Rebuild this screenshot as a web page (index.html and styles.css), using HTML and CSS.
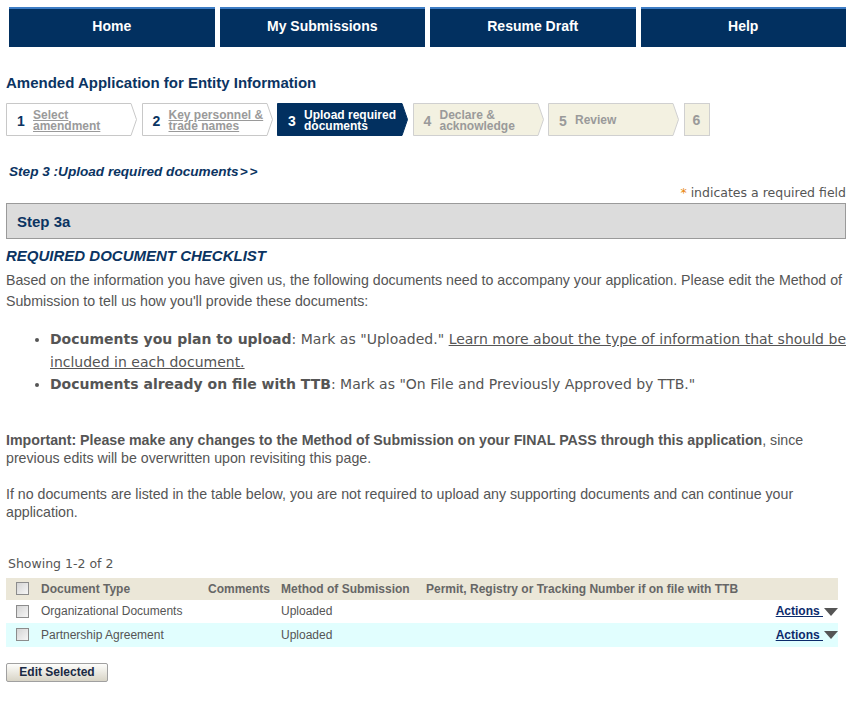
FILE: index.html
```html
<!DOCTYPE html>
<html lang="en">
<head>
<meta charset="utf-8">
<title>Amended Application for Entity Information</title>
<link rel="stylesheet" href="styles.css">
</head>
<body>
<nav class="topnav">
  <a class="navbtn" href="#">Home</a>
  <a class="navbtn" href="#">My Submissions</a>
  <a class="navbtn" href="#">Resume Draft</a>
  <a class="navbtn" href="#">Help</a>
</nav>
<main class="page">
  <h1 class="title">Amended Application for Entity Information</h1>

  <ol class="steps">
    <li class="step done">
      <svg class="step-bg" viewBox="0 0 131 33" preserveAspectRatio="none"><polygon points="0.5,0.5 125,0.5 130.5,16.5 125,32.5 0.5,32.5"/></svg>
      <span class="num">1</span><a class="lbl" href="#">Select<br>amendment</a>
    </li>
    <li class="step done">
      <svg class="step-bg" viewBox="0 0 131 33" preserveAspectRatio="none"><polygon points="0.5,0.5 125,0.5 130.5,16.5 125,32.5 0.5,32.5"/></svg>
      <span class="num">2</span><a class="lbl" href="#">Key personnel &amp;<br>trade names</a>
    </li>
    <li class="step current">
      <svg class="step-bg" viewBox="0 0 131 33" preserveAspectRatio="none"><polygon points="0.5,0.5 125,0.5 130.5,16.5 125,32.5 0.5,32.5"/></svg>
      <span class="num">3</span><span class="lbl">Upload required<br>documents</span>
    </li>
    <li class="step todo">
      <svg class="step-bg" viewBox="0 0 131 33" preserveAspectRatio="none"><polygon points="0.5,0.5 125,0.5 130.5,16.5 125,32.5 0.5,32.5"/></svg>
      <span class="num">4</span><span class="lbl">Declare &amp;<br>acknowledge</span>
    </li>
    <li class="step todo">
      <svg class="step-bg" viewBox="0 0 131 33" preserveAspectRatio="none"><polygon points="0.5,0.5 125,0.5 130.5,16.5 125,32.5 0.5,32.5"/></svg>
      <span class="num">5</span><span class="lbl">Review</span>
    </li>
    <li class="step-last"><span class="num">6</span></li>
  </ol>

  <p class="stepline">Step 3 :Upload required documents<span class="arrows">&gt;&gt;</span></p>
  <p class="required"><span class="ast">*</span> indicates a required field</p>

  <div class="panel-head">Step 3a</div>

  <h2 class="checklist">REQUIRED DOCUMENT CHECKLIST</h2>
  <p class="body-text">Based on the information you have given us, the following documents need to accompany your application. Please edit the Method of Submission to tell us how you'll provide these documents:</p>

  <ul class="bullets">
    <li><strong>Documents you plan to upload</strong>: Mark as "Uploaded." <a href="#">Learn more about the type of information that should be included in each document.</a></li>
    <li><strong>Documents already on file with TTB</strong>: Mark as "On File and Previously Approved by TTB."</li>
  </ul>

  <p class="body-text important"><strong>Important: Please make any changes to the Method of Submission on your FINAL PASS through this application</strong>, since previous edits will be overwritten upon revisiting this page.</p>

  <p class="body-text nodocs">If no documents are listed in the table below, you are not required to upload any supporting documents and can continue your application.</p>

  <p class="showing">Showing 1-2 of 2</p>

  <table class="docs">
    <thead>
      <tr>
        <th class="c-cb"><span class="cb"></span></th>
        <th class="c-type">Document Type</th>
        <th class="c-com">Comments</th>
        <th class="c-meth">Method of Submission</th>
        <th class="c-perm">Permit, Registry or Tracking Number if on file with TTB</th>
        <th class="c-act"></th>
      </tr>
    </thead>
    <tbody>
      <tr>
        <td class="c-cb"><span class="cb"></span></td>
        <td>Organizational Documents</td>
        <td></td>
        <td>Uploaded</td>
        <td></td>
        <td class="c-act"><a href="#">Actions </a><svg class="caret" viewBox="0 0 14 8"><polygon points="0,0 14,0 7,8"/></svg></td>
      </tr>
      <tr class="alt">
        <td class="c-cb"><span class="cb"></span></td>
        <td>Partnership Agreement</td>
        <td></td>
        <td>Uploaded</td>
        <td></td>
        <td class="c-act"><a href="#">Actions </a><svg class="caret" viewBox="0 0 14 8"><polygon points="0,0 14,0 7,8"/></svg></td>
      </tr>
    </tbody>
  </table>

  <button class="btn" type="button">Edit Selected</button>
</main>
</body>
</html>
```
FILE: styles.css
```css
* { box-sizing: border-box; }
body {
  margin: 0;
  font-family: "Liberation Sans", Arial, sans-serif;
  color: #555;
  background: #fff;
}
.topnav {
  display: flex;
  gap: 5px;
  padding: 7px 8px 0 9px;
}
.navbtn {
  flex: 1;
  height: 40px;
  display: flex;
  align-items: center;
  justify-content: center;
  padding-bottom: 4px;
  background: #023060;
  border-top: 2px solid #3d7cc4;
  color: #fff;
  font-weight: bold;
  font-size: 14px;
  text-decoration: none;
}
.page {
  padding: 0 8px 0 6px;
}
.title {
  margin: 27px 0 0;
  font-size: 15px;
  line-height: 18px;
  color: #0b3462;
}
.steps {
  list-style: none;
  margin: 11px 0 0;
  padding: 0;
  display: flex;
  gap: 4.5px;
  height: 33px;
}
.step {
  position: relative;
  width: 131px;
  height: 33px;
  display: flex;
  align-items: center;
  padding-left: 11px;
  padding-top: 2px;
  font-weight: bold;
}
.step-bg {
  position: absolute;
  left: 0;
  top: 0;
  width: 100%;
  height: 100%;
  z-index: 0;
}
.step-bg polygon { stroke: #c8c8c8; stroke-width: 1; fill: #fff; }
.step .num, .step .lbl { position: relative; z-index: 1; }
.num {
  font-size: 14px;
  width: 8px;
}
.lbl {
  margin-left: 8px;
  font-size: 12px;
  line-height: 10.5px;
}
.done .num { color: #0b3462; }
.done .lbl { color: #9a9a9a; text-decoration: underline; }
.current .step-bg polygon { fill: #023060; stroke: #023060; }
.current .num, .current .lbl { color: #fff; }
.todo .step-bg polygon { fill: #f3f1e1; stroke: #d0d0d0; }
.todo .num, .todo .lbl { color: #9a9a9a; }
.step-last {
  width: 26px;
  height: 33px;
  border: 1px solid #d0d0d0;
  background: #f3f1e1;
  display: flex;
  align-items: center;
  justify-content: center;
  font-weight: bold;
  color: #9a9a9a;
}
.stepline {
  margin: 28px 0 0 3px;
  font-size: 13.6px;
  line-height: 16px;
  font-weight: bold;
  font-style: italic;
  color: #0b3462;
}
.arrows { letter-spacing: 2px; margin-left: 1px; }
.required {
  margin: 5px 0 0;
  text-align: right;
  font-family: "DejaVu Sans", Verdana, sans-serif;
  font-size: 12.5px;
  line-height: 16px;
  color: #555;
}
.ast { color: #e8870f; }
.panel-head {
  margin-top: 2px;
  height: 36px;
  border: 1px solid #9a9a9a;
  background: #dcdcdc;
  padding-left: 10px;
  display: flex;
  align-items: center;
  font-weight: bold;
  font-size: 15px;
  color: #0b3462;
}
.checklist {
  margin: 8px 0 0;
  font-size: 15px;
  line-height: 18px;
  font-style: italic;
  color: #0b3462;
}
.body-text {
  margin: 5px 0 0;
  font-size: 14.2px;
  line-height: 21px;
  color: #555;
}
.bullets {
  margin: 16px 0 0;
  padding-left: 44px;
  font-family: "DejaVu Sans", Verdana, sans-serif;
  font-size: 14px;
  line-height: 22.5px;
  color: #555;
  text-align: justify;
}
.bullets strong { color: #555; }
.bullets a { color: #555; }
.important {
  margin-top: 35px;
  line-height: 18px;
}
.nodocs {
  margin-top: 18px;
  line-height: 18px;
}
.showing {
  margin: 35px 0 0 2px;
  font-family: "DejaVu Sans", Verdana, sans-serif;
  font-size: 12.5px;
  line-height: 16px;
}
.docs {
  margin-top: 6px;
  width: 832px;
  border-collapse: collapse;
  font-size: 12px;
}
.docs th {
  background: #ebe7d8;
  height: 22px;
  text-align: left;
  font-weight: bold;
  color: #666;
  padding: 0;
}
.docs td {
  height: 23px;
  padding: 0;
  color: #555;
}
.docs tr.alt td { background: #e1fefe; height: 24px; }
.c-cb { width: 35px; padding-left: 10px !important; }
.c-type { width: 167px; }
.c-com { width: 73px; }
.c-meth { width: 145px; }
.c-act { text-align: right; white-space: nowrap; }
.cb {
  display: block;
  width: 13px;
  height: 13px;
  border: 1px solid #8c8c8c;
  background: linear-gradient(135deg, #d4d4d4, #f6f6f6);
}
.c-act a {
  color: #0b2a6b;
  font-weight: bold;
  font-size: 12px;
  text-decoration: underline;
}
.caret {
  width: 14px;
  height: 8px;
  margin-left: 1px;
  vertical-align: middle;
}
.caret polygon { fill: #555; }
.btn {
  margin-top: 16px;
  width: 102px;
  height: 19px;
  border: 1px solid #a0a0a0;
  border-radius: 2px;
  background: linear-gradient(#fdfdfb, #d8d4c6);
  font-family: "Liberation Sans", Arial, sans-serif;
  font-weight: bold;
  font-size: 12px;
  color: #1a2a44;
  padding: 0;
}
```
